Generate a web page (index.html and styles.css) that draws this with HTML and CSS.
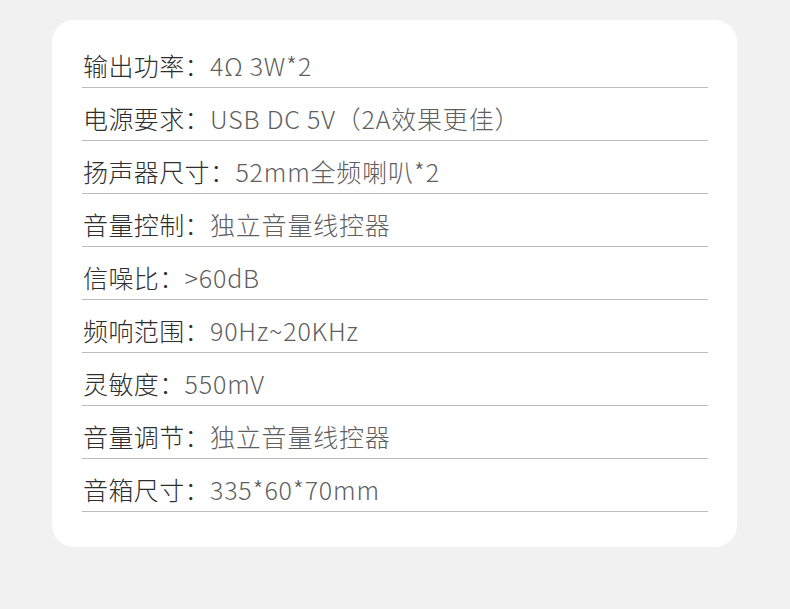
FILE: index.html
```html
<!DOCTYPE html>
<html lang="zh-CN">
<head>
<meta charset="utf-8">
<link rel="stylesheet" href="styles.css">
</head>
<body>
<div class="card">
  <ul class="specs">
    <li class="row"><span class="label">输出功率：</span><span class="value">4Ω 3W*2</span></li>
    <li class="row"><span class="label">电源要求：</span><span class="value">USB DC 5V（2A效果更佳）</span></li>
    <li class="row"><span class="label">扬声器尺寸：</span><span class="value">52mm全频喇叭*2</span></li>
    <li class="row"><span class="label">音量控制：</span><span class="value">独立音量线控器</span></li>
    <li class="row"><span class="label">信噪比：</span><span class="value">&gt;60dB</span></li>
    <li class="row"><span class="label">频响范围：</span><span class="value">90Hz~20KHz</span></li>
    <li class="row"><span class="label">灵敏度：</span><span class="value">550mV</span></li>
    <li class="row"><span class="label">音量调节：</span><span class="value">独立音量线控器</span></li>
    <li class="row"><span class="label">音箱尺寸：</span><span class="value">335*60*70mm</span></li>
  </ul>
</div>
</body>
</html>
```

FILE: styles.css
```css
html, body {
  margin: 0;
  padding: 0;
  background: #f1f1f1;
}
body {
  width: 790px;
  height: 609px;
  padding: 20px 0 0 52px;
  box-sizing: border-box;
  font-family: "Noto Sans CJK SC", "Noto Sans", sans-serif;
}
.card {
  width: 685px;
  height: 527px;
  box-sizing: border-box;
  background: #ffffff;
  border-radius: 22px;
  padding: 15px 29px 0 30px;
}
.specs {
  list-style: none;
  margin: 0;
  padding: 0;
}
.row {
  box-sizing: border-box;
  height: 53px;
  border-bottom: 1px solid #bdbdbd;
  display: flex;
  align-items: flex-end;
  padding: 0 0 9px 1px;
  font-size: 25px;
  line-height: 25px;
  font-weight: 300;
}
.label {
  color: #2e2e2e;
  letter-spacing: 0.4px;
}
.value {
  color: #5f5f5f;
  letter-spacing: 0.8px;
}
```
